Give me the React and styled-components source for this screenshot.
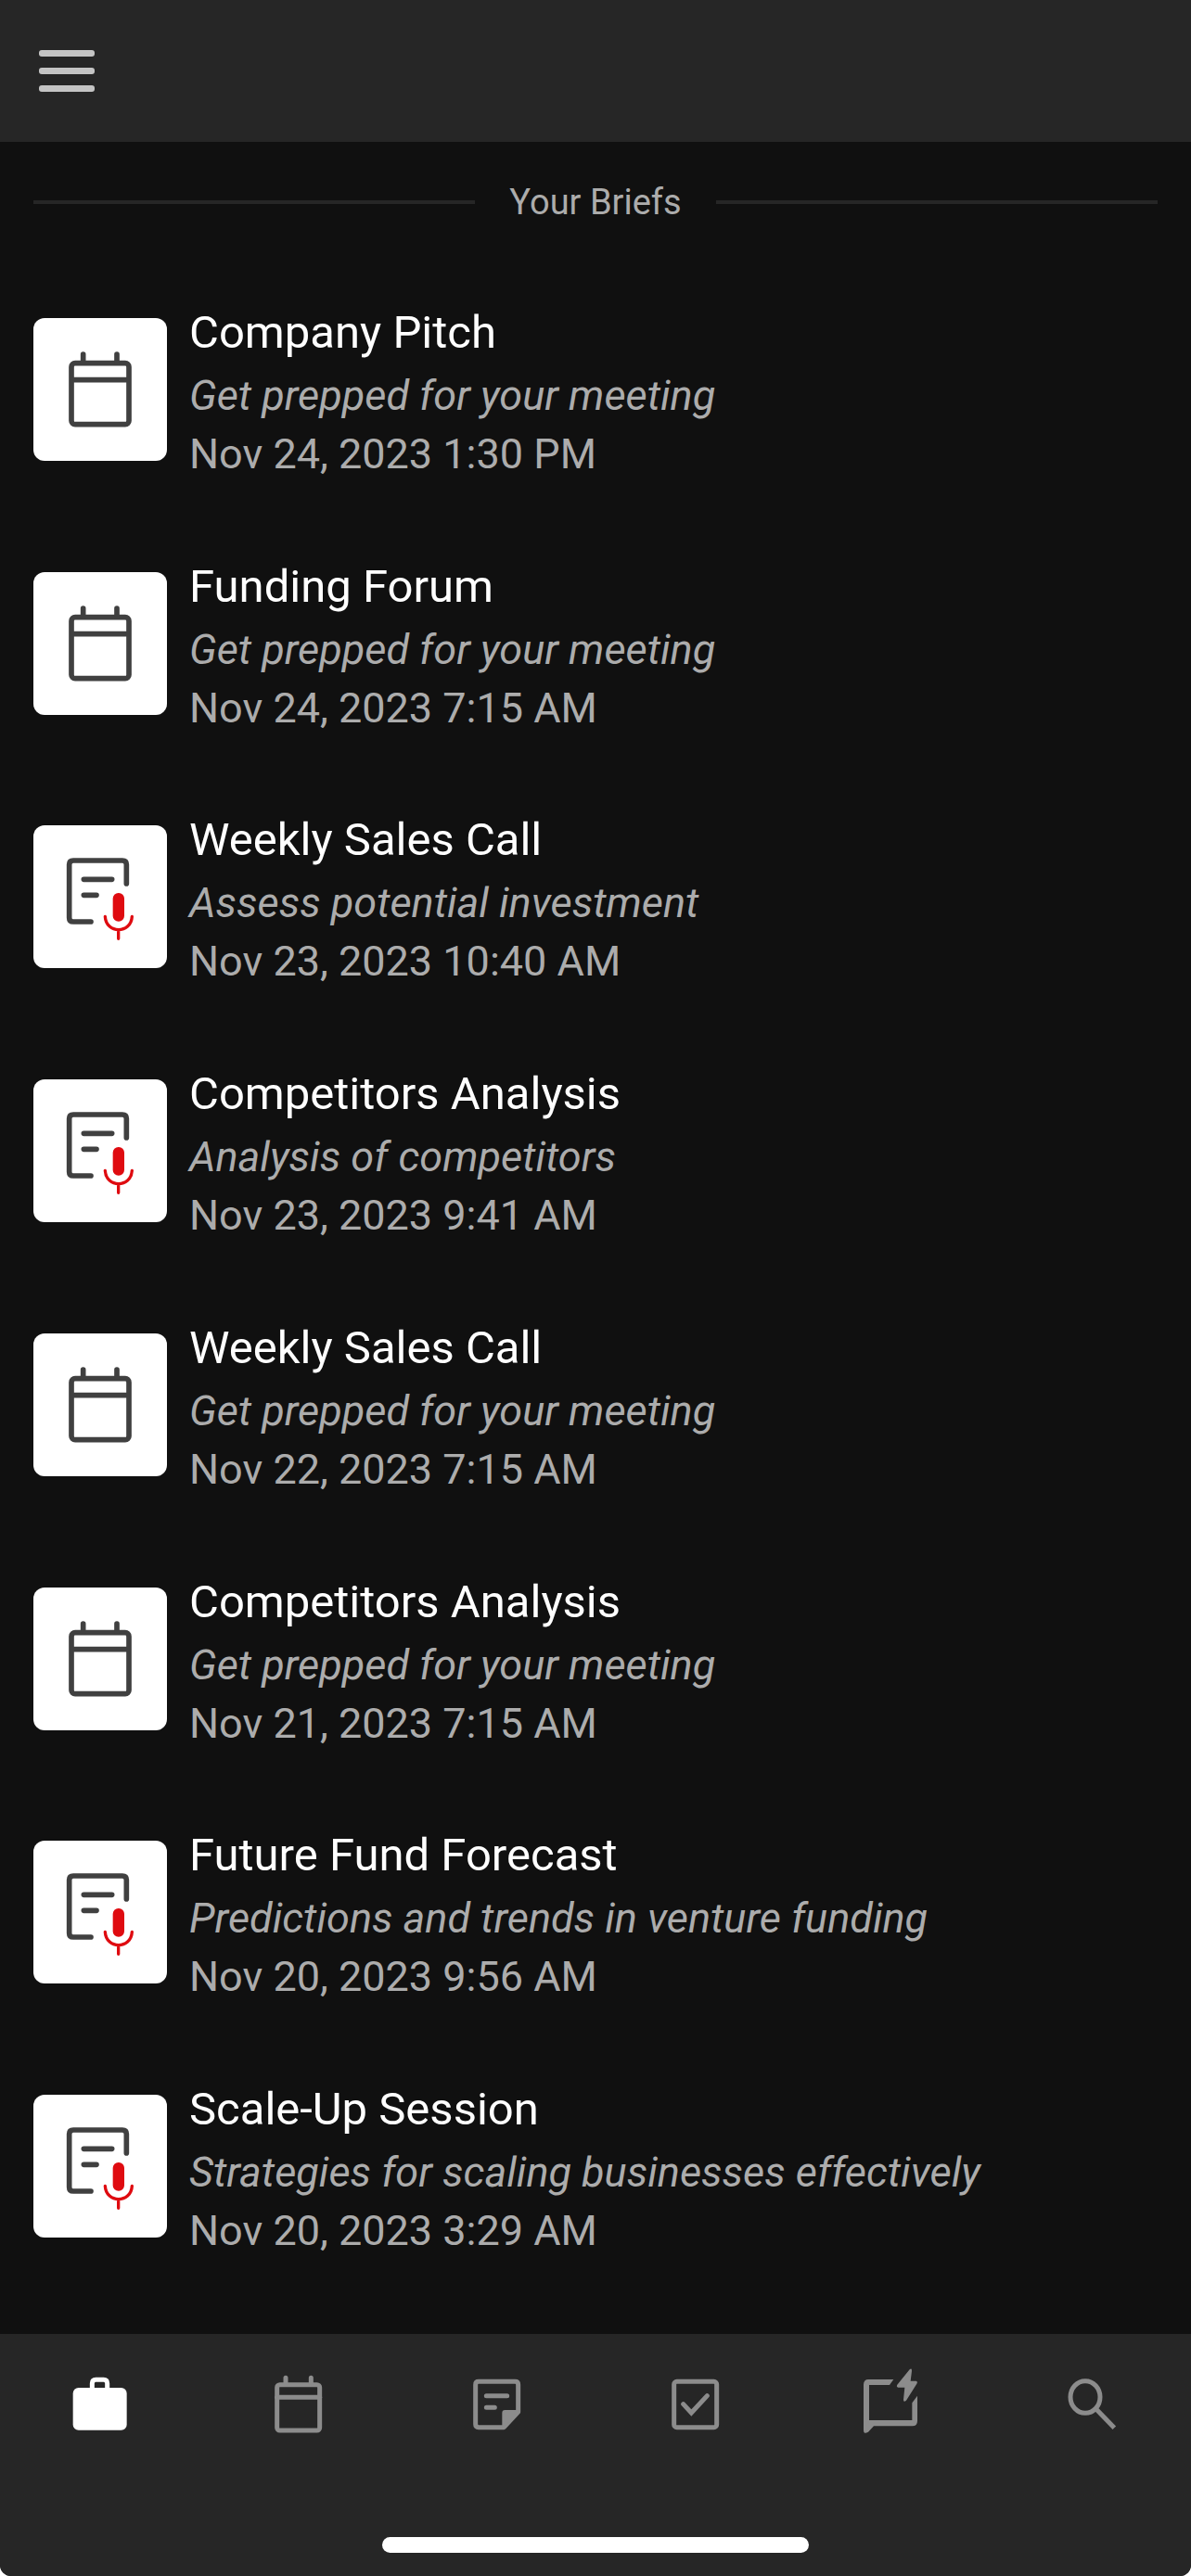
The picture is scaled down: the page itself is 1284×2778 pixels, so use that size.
import React from "react";
import styled, { createGlobalStyle } from "styled-components";

const GlobalStyle = createGlobalStyle`
  * { box-sizing: border-box; }
  body { margin: 0; background: #ffffff; }
`;

const Page = styled.div`
  min-height: 100vh;
  display: flex;
  flex-direction: column;
  background: #101010;
  color: #ffffff;
  font-family: Roboto, "Liberation Sans", sans-serif;
  border-radius: 0 0 12px 12px;
  overflow: hidden;
`;

const Header = styled.header`
  height: 153px;
  padding: 0 42px;
  display: flex;
  align-items: center;
  background: #262626;
`;

const MenuButton = styled.button`
  display: flex;
  flex-direction: column;
  gap: 12px;
  width: 60px;
  padding: 0;
  border: 0;
  background: none;
`;

const MenuBar = styled.span`
  height: 7px;
  border-radius: 3px;
  background: #c4c4c4;
`;

const Main = styled.main`
  flex: 1;
  display: flex;
  flex-direction: column;
  padding: 0 36px 44px;
`;

const SectionTitle = styled.h1`
  display: flex;
  align-items: center;
  gap: 37px;
  height: 130px;
  margin: 0;
  font-size: 38px;
  font-weight: 400;
  color: #acacac;

  &::before,
  &::after {
    content: "";
    flex: 1;
    height: 4px;
    background: #262626;
  }
`;

const BriefList = styled.ul`
  flex: 1;
  display: grid;
  grid-auto-rows: 1fr;
  margin: 0;
  padding: 0;
  list-style: none;
`;

const BriefLink = styled.a`
  height: 100%;
  display: flex;
  align-items: center;
  gap: 24px;
  color: inherit;
  text-decoration: none;
`;

const Tile = styled.span`
  flex: none;
  display: flex;
  align-items: center;
  justify-content: center;
  width: 144px;
  height: 154px;
  border-radius: 12px;
  background: #ffffff;
  color: #404040;
`;

const BriefText = styled.span`
  display: flex;
  flex-direction: column;
  padding-top: 4px;
`;

const BriefName = styled.span`
  font-size: 49px;
  line-height: 72px;
`;

const BriefDetail = styled.span`
  font-size: 45px;
  line-height: 63px;
  font-style: ${(p) => (p.$italic ? "italic" : "normal")};
  color: #acacac;
`;

const Footer = styled.footer`
  display: flex;
  flex-direction: column;
  align-items: center;
  gap: 103px;
  padding: 36px 0 25px;
  background: #262626;
`;

const Tabs = styled.nav`
  width: 100%;
  display: grid;
  grid-template-columns: repeat(6, 1fr);
`;

const Tab = styled.button`
  display: flex;
  justify-content: center;
  padding: 0;
  border: 0;
  background: none;
  color: ${(p) => (p.$active ? "#ffffff" : "#8c8c8c")};
`;

const HomeIndicator = styled.div`
  width: 460px;
  height: 17px;
  border-radius: 9px;
  background: #ffffff;
`;

function MeetingIcon() {
  return (
    <svg width="68" height="82" viewBox="0 0 204 246" fill="none" stroke="currentColor" strokeWidth="17" aria-hidden="true">
      <rect x="9" y="38" width="186" height="198" rx="12" />
      <path d="M9 92H195" />
      <path d="M47 9V36M156 9V36" strokeLinecap="round" />
    </svg>
  );
}

function VoiceNoteIcon() {
  return (
    <svg width="74" height="90" viewBox="153 156 222 270" overflow="visible" fill="none" stroke="currentColor" strokeWidth="17" strokeLinecap="round" aria-hidden="true">
      <path d="M349 249V187Q349 174 336 174H177Q164 174 164 187V359Q164 372 177 372H234" />
      <path d="M211 235H302M211 286H252" />
      <rect x="305" y="279" width="37" height="92" rx="18" fill="#df0b10" stroke="none" />
      <path d="M280 355C283 412 364 412 367 355M323 400V427" stroke="#df0b10" strokeWidth="10" />
    </svg>
  );
}

function TabIcon({ x, children }) {
  return (
    <svg width="80" height="80" viewBox={`${x} 160 240 240`} fill="none" stroke="currentColor" strokeWidth="15" strokeLinecap="round" aria-hidden="true">
      {children}
    </svg>
  );
}

const TABS = [
  {
    label: "Briefs",
    icon: (
      <TabIcon x={141}>
        <rect x="176" y="226" width="174" height="137" rx="18" fill="currentColor" stroke="none" />
        <path d="M238 232V212Q238 200 250 200H275Q287 200 287 212V232" />
      </TabIcon>
    ),
  },
  {
    label: "Calendar",
    icon: (
      <TabIcon x={783}>
        <rect x="836" y="216" width="138" height="148" rx="9" />
        <path d="M836 257H974" />
        <path d="M864 194V212M946 194V212" />
      </TabIcon>
    ),
  },
  {
    label: "Notes",
    icon: (
      <TabIcon x={165}>
        <path d="M218 216Q218 206 228 206H346Q356 206 356 216V304L310 354H228Q218 354 218 344Z" strokeLinejoin="round" />
        <path d="M304 307Q304 298 313 298H360L310 356H304Z" fill="currentColor" stroke="none" />
        <path d="M253 252H320M253 290H280" />
      </TabIcon>
    ),
  },
  {
    label: "Tasks",
    icon: (
      <TabIcon x={807}>
        <rect x="860" y="206" width="138" height="148" rx="9" />
        <path d="M890 279L916 307L967 252" />
      </TabIcon>
    ),
  },
  {
    label: "Quick chat",
    icon: (
      <TabIcon x={189}>
        <path
          d="M310 199L297 217H231V331H370V275L387 252V333Q387 350 371 350H246L228 369Q213 378 213 363V216Q213 199 229 199Z"
          fill="currentColor"
          stroke="none"
        />
        <path
          d="M362 167Q369 161 369 171L365 204H383Q389 206 385 213L351 267Q342 274 342 265L346 225H325Q318 223 322 216Z"
          fill="currentColor"
          stroke="none"
        />
      </TabIcon>
    ),
  },
  {
    label: "Search",
    icon: (
      <TabIcon x={831}>
        <ellipse cx="930" cy="256" rx="48" ry="52" />
        <path d="M966 296L1024 356" strokeLinecap="butt" />
      </TabIcon>
    ),
  },
];

const BRIEFS = [
  { name: "Company Pitch", summary: "Get prepped for your meeting", date: "Nov 24, 2023 1:30 PM" },
  { name: "Funding Forum", summary: "Get prepped for your meeting", date: "Nov 24, 2023 7:15 AM" },
  { name: "Weekly Sales Call", summary: "Assess potential investment", date: "Nov 23, 2023 10:40 AM", voice: true },
  { name: "Competitors Analysis", summary: "Analysis of competitors", date: "Nov 23, 2023 9:41 AM", voice: true },
  { name: "Weekly Sales Call", summary: "Get prepped for your meeting", date: "Nov 22, 2023 7:15 AM" },
  { name: "Competitors Analysis", summary: "Get prepped for your meeting", date: "Nov 21, 2023 7:15 AM" },
  { name: "Future Fund Forecast", summary: "Predictions and trends in venture funding", date: "Nov 20, 2023 9:56 AM", voice: true },
  { name: "Scale-Up Session", summary: "Strategies for scaling businesses effectively", date: "Nov 20, 2023 3:29 AM", voice: true },
];

export default function App() {
  return (
    <Page>
      <GlobalStyle />
      <Header>
        <MenuButton type="button" aria-label="Menu">
          <MenuBar />
          <MenuBar />
          <MenuBar />
        </MenuButton>
      </Header>
      <Main>
        <SectionTitle>Your Briefs</SectionTitle>
        <BriefList>
          {BRIEFS.map((brief) => (
            <li key={brief.date}>
              <BriefLink href="#">
                <Tile>{brief.voice ? <VoiceNoteIcon /> : <MeetingIcon />}</Tile>
                <BriefText>
                  <BriefName>{brief.name}</BriefName>
                  <BriefDetail $italic>{brief.summary}</BriefDetail>
                  <BriefDetail>{brief.date}</BriefDetail>
                </BriefText>
              </BriefLink>
            </li>
          ))}
        </BriefList>
      </Main>
      <Footer>
        <Tabs aria-label="Sections">
          {TABS.map((tab, i) => (
            <Tab key={tab.label} type="button" aria-label={tab.label} $active={i === 0}>
              {tab.icon}
            </Tab>
          ))}
        </Tabs>
        <HomeIndicator />
      </Footer>
    </Page>
  );
}
